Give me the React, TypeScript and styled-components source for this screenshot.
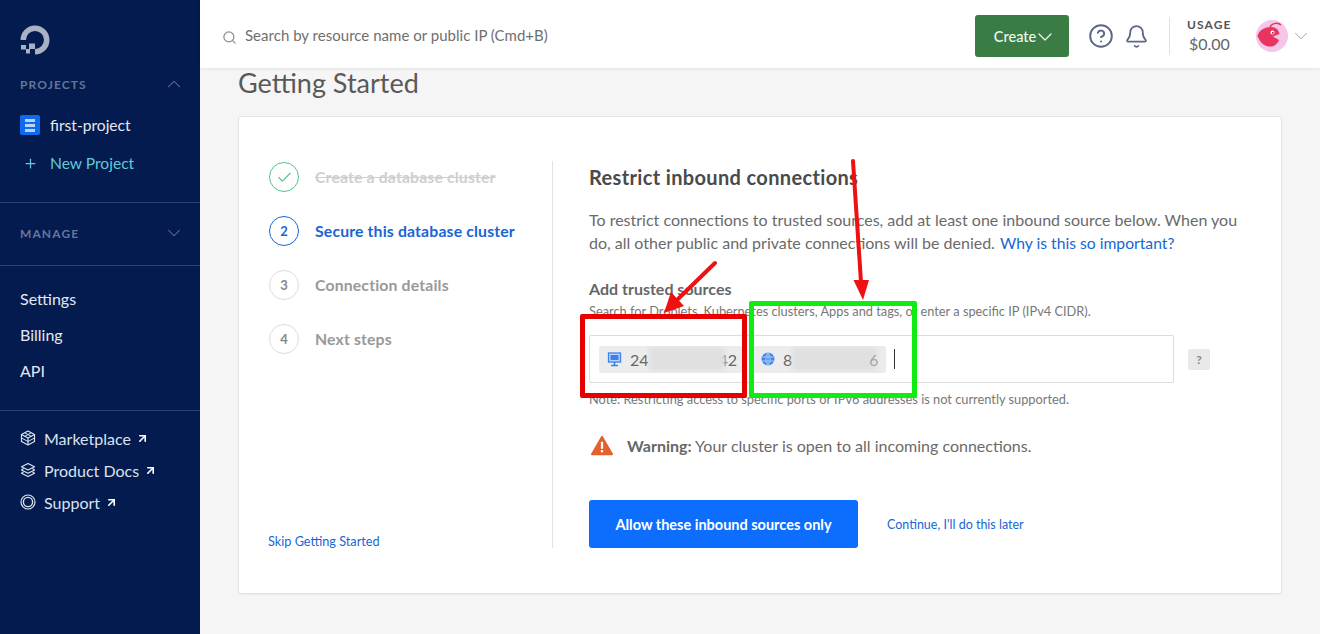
import React from 'react'
import styled, { createGlobalStyle } from 'styled-components'
import {
  ArrowUpRight,
  Bell,
  Check,
  ChevronDown,
  ChevronUp,
  CircleHelp,
  Plus,
  Search
} from 'lucide-react'

const GlobalStyle = createGlobalStyle`
  html, body {
    margin: 0;
    height: 100%;
    overflow: hidden;
    background: #f5f5f5;
    font-family: Lato, "Open Sans", sans-serif;
  }
  * { box-sizing: border-box; }
`

const Page = styled.div`
  display: flex;
  height: 634px;
  position: relative;
  overflow: hidden;
`

/* sidebar */
const Sidebar = styled.aside`
  width: 200px;
  flex: none;
  background: #031b4e;
  display: flex;
  flex-direction: column;
`

const LogoWrap = styled.div`
  padding: 25px 20px 0;
  height: 71px;
  svg { display: block; }
`

const Section = styled.div<{ $divided?: boolean; $top: number; $bottom: number }>`
  padding: ${p => p.$top}px 20px ${p => p.$bottom}px;
  border-top: ${p => (p.$divided ? '1px solid #2d4275' : 'none')};
`

const SectionHead = styled.div<{ $after?: number }>`
  height: 26px;
  margin-bottom: ${p => p.$after ?? 0}px;
  display: flex;
  align-items: center;
  justify-content: space-between;
  color: #66769b;
  font-size: 12px;
  font-weight: 700;
  letter-spacing: 1.1px;
  svg { margin-right: -5px; }
`

const ProjectRow = styled.div<{ $accent?: boolean }>`
  height: 38px;
  display: flex;
  align-items: center;
  gap: 10px;
  font-size: 15.6px;
  color: ${p => (p.$accent ? '#64c7d8' : '#e3e8f2')};
`

const ProjectIcon = styled.span`
  width: 20px;
  height: 20px;
  border-radius: 2px;
  background: #0f6af0;
  display: flex;
  flex-direction: column;
  justify-content: center;
  align-items: center;
  gap: 2px;
  i {
    display: block;
    width: 10px;
    height: 3px;
    background: #b6d6ff;
  }
`

const PlusSlot = styled.span`
  width: 20px;
  display: flex;
  justify-content: center;
`

const NavLink = styled.div`
  height: 36px;
  display: flex;
  align-items: center;
  font-size: 16px;
  color: #e3e8f2;
`

const ExternalLink = styled.div`
  height: 32px;
  display: flex;
  align-items: center;
  gap: 8px;
  font-size: 16px;
  color: #dce2ee;
  svg.arrow { margin-left: -3px; color: #fff; }
`

/* top bar */
const Main = styled.div`
  flex: 1;
  min-width: 0;
  display: flex;
  flex-direction: column;
`

const TopBar = styled.header`
  height: 68px;
  flex: none;
  background: #fff;
  box-shadow: 0 1px 3px rgba(0, 0, 0, 0.08);
  display: flex;
  align-items: center;
  padding: 4px 0 0 22px;
  position: relative;
  z-index: 1;
`

const SearchBox = styled.div`
  flex: 1;
  display: flex;
  align-items: center;
  gap: 8px;
  margin-top: -2px;
  color: #6f6f6f;
  font-size: 15px;
  letter-spacing: 0.02px;
  svg { color: #8e8e8e; margin-top: 4px; }
`

const CreateButton = styled.div`
  width: 94px;
  height: 42px;
  background: #3a7d44;
  border-radius: 3px;
  color: #f2f7f2;
  font-size: 14.5px;
  font-weight: 500;
  padding-left: 2px;
  display: flex;
  align-items: center;
  justify-content: center;
  svg { margin: 0 -5px -1px -3px; }
`

const TopIcons = styled.div`
  display: flex;
  align-items: center;
  gap: 10px;
  margin-left: 19px;
  color: #5b6987;
`

const UsageBox = styled.div`
  margin-left: 20px;
  height: 38px;
  border-left: 1px solid #e2e2e2;
  padding-left: 17px;
  width: 87px;
  display: flex;
  flex-direction: column;
  align-items: flex-start;
`

const UsageLabel = styled.span`
  font-size: 12px;
  font-weight: 700;
  letter-spacing: 1.1px;
  color: #555;
  line-height: 15px;
`

const UsageValue = styled.span`
  font-size: 16px;
  color: #666;
  line-height: 23px;
  padding-left: 2px;
`

const AvatarArea = styled.div`
  display: flex;
  align-items: center;
  gap: 2px;
  padding-right: 8px;
  color: #9a9fac;
`

/* content */
const Content = styled.main`
  flex: 1;
  padding: 0 38px;
`

const Title = styled.h1`
  margin: 0;
  height: 30px;
  line-height: 30px;
  font-size: 27px;
  font-weight: 400;
  color: #595959;
`

const Card = styled.section`
  margin-top: 18px;
  height: 478px;
  background: #fff;
  border: 1px solid #e3e3e3;
  border-radius: 3px;
  box-shadow: 0 1px 2px rgba(0, 0, 0, 0.05);
  padding: 44px 0 45px;
  display: flex;
`

const StepsColumn = styled.div`
  width: 314px;
  flex: none;
  padding: 1px 0 0 30px;
  border-right: 1px solid #e3e3e3;
  display: flex;
  flex-direction: column;
`

const Step = styled.div`
  height: 54px;
  flex: none;
  display: flex;
  gap: 16px;
`

const StepCircle = styled.span<{ $state: 'done' | 'active' | 'idle' }>`
  width: 30px;
  height: 30px;
  border-radius: 50%;
  flex: none;
  display: flex;
  align-items: center;
  justify-content: center;
  font-size: 13px;
  font-weight: 700;
  border: 1px solid
    ${p => (p.$state === 'done' ? '#4fc58a' : p.$state === 'active' ? '#1766d6' : '#dcdcdc')};
  color: ${p => (p.$state === 'done' ? '#4fc58a' : p.$state === 'active' ? '#1766d6' : '#888')};
`

const StepLabel = styled.span<{ $state: 'done' | 'active' | 'idle' }>`
  line-height: 30px;
  font-size: 15.8px;
  letter-spacing: 0.15px;
  font-weight: 700;
  color: ${p => (p.$state === 'done' ? '#cfcfcf' : p.$state === 'active' ? '#1766d6' : '#999')};
  text-decoration: ${p => (p.$state === 'done' ? 'line-through' : 'none')};
`

const SkipLink = styled.a`
  margin: auto 0 0 -1px;
  font-size: 12.7px;
  line-height: 14px;
  color: #1766d6;
`

const FormColumn = styled.div`
  flex: 1;
  padding: 1px 40px 0 36px;
`

const Heading = styled.h2`
  margin: 0;
  line-height: 30px;
  font-size: 20px;
  letter-spacing: 0.35px;
  font-weight: 700;
  color: #4a4a4a;
`

const Intro = styled.p`
  margin: 16px 0 0;
  font-size: 16px;
  line-height: 23px;
  color: #6a6a6a;
  a { color: #1766d6; font-size: 15.7px; margin-left: 1px; }
`

const FieldLabel = styled.div`
  margin-top: 24px;
  font-size: 16px;
  line-height: 20px;
  font-weight: 700;
  color: #666;
`

const Hint = styled.div<{ $gap: number }>`
  margin-top: ${p => p.$gap}px;
  font-size: 12.8px;
  line-height: 14px;
  color: #777;
`

const FieldRow = styled.div`
  margin-top: 17px;
  display: flex;
  align-items: center;
  gap: 14px;
`

const TagInput = styled.div`
  width: 585px;
  height: 48px;
  border: 1px solid #dcdcdc;
  border-radius: 2px;
  padding-left: 9px;
  display: flex;
  align-items: center;
  gap: 11px;
`

const Chip = styled.span<{ $width: number }>`
  width: ${p => p.$width}px;
  height: 27px;
  background: #ececec;
  border-radius: 2px;
  display: flex;
  align-items: center;
  gap: 8px;
  padding-left: 8px;
  font-size: 16px;
  color: #666;
  overflow: hidden;
  flex: none;
  svg { flex: none; }
`

const Smudge = styled.span<{ $width: number }>`
  width: ${p => p.$width}px;
  height: 24px;
  flex: none;
  margin: 0 -8px;
  background: #e0e0e0;
  filter: blur(2px);
`

const Tail = styled.span<{ $shift: number; $fade?: number }>`
  margin-left: ${p => p.$shift}px;
  opacity: ${p => p.$fade ?? 1};
`

const Caret = styled.span`
  width: 1px;
  height: 20px;
  background: #333;
  margin-left: -3px;
`

const HelpBadge = styled.span`
  width: 22px;
  height: 21px;
  border-radius: 2px;
  background: #e9e9e9;
  color: #888;
  font-size: 12px;
  font-weight: 700;
  display: flex;
  align-items: center;
  justify-content: center;
`

const WarningRow = styled.div`
  margin-top: 26px;
  padding-left: 2px;
  display: flex;
  align-items: center;
  gap: 14px;
  height: 26px;
  font-size: 16px;
  color: #6a6a6a;
  b { color: #666; }
`

const Actions = styled.div`
  margin-top: 42px;
  display: flex;
  align-items: center;
  gap: 29px;
`

const PrimaryButton = styled.button`
  width: 269px;
  height: 48px;
  background: #0d6efd;
  border: 0;
  border-radius: 3px;
  color: #fff;
  font: 700 14.5px Lato, sans-serif;
`

const LaterLink = styled.a`
  font-size: 12.5px;
  color: #1766d6;
`

/* annotations painted on the screenshot */
const Frame = styled.div<{ $color: string; $l: number; $t: number; $w: number; $h: number }>`
  position: absolute;
  left: ${p => p.$l}px;
  top: ${p => p.$t}px;
  width: ${p => p.$w}px;
  height: ${p => p.$h}px;
  border: 5px solid ${p => p.$color};
  border-radius: 2px;
`

const ArrowLayer = styled.svg`
  position: absolute;
  left: 0;
  top: 0;
  pointer-events: none;
`

const Logo = () => (
  <svg width='30' height='30' viewBox='0 0 30 30' fill='#a9b1c4'>
    <path d='M15 29.5v-5.6a9 9 0 1 0-9-8.9H.5A14.5 14.5 0 1 1 15 29.5z' />
    <rect x='9' y='18.500' width='6' height='5.500' />
    <rect x='6' y='24' width='4' height='4.500' />
    <rect x='1' y='20' width='5' height='4.500' />
  </svg>
)

const CubeIcon = () => (
  <svg width='16' height='16' viewBox='0 0 16 16' fill='none' stroke='currentColor' strokeWidth='1.200' strokeLinejoin='round'>
    <path d='M8 1 14.500 4.500v7L8 15 1.500 11.500v-7z' />
    <path d='M1.500 4.500 8 8l6.500-3.500M8 8v7' />
    <path d='M1.500 8 8 11.500 14.500 8M4.800 2.800 11.200 6.300M11.200 2.800 4.800 6.300' strokeWidth='1' />
  </svg>
)

const StackIcon = () => (
  <svg width='16' height='16' viewBox='0 0 16 16' fill='none' stroke='currentColor' strokeWidth='1.200' strokeLinejoin='round'>
    <path d='M8 1.500 14.500 4.800 8 8 1.500 4.800z' />
    <path d='M3.500 6.500 1.500 8 8 11.300 14.500 8l-2-1.500' />
    <path d='M3.500 9.800 1.500 11.200 8 14.500l6.500-3.300-2-1.400' />
  </svg>
)

const SupportIcon = () => (
  <svg width='16' height='16' viewBox='0 0 16 16' fill='none' stroke='currentColor' strokeWidth='1.2'>
    <circle cx='8' cy='8' r='7' />
    <circle cx='8' cy='8' r='4.600' strokeWidth='1.4' />
  </svg>
)

const Avatar = () => (
  <svg width='32' height='32' viewBox='0 0 32 32'>
    <circle cx='16' cy='16' r='16' fill='#f3c6ea' />
    <path d='M1.500 16C3 10 9 7 15 7c5 0 8 3 8.500 7L17 16.500l6 3.500c-2 5-6 7-10 6.500-5-.5-9-4-11.500-10.500z' fill='#e8345f' />
    <path d='M14 7c2-4 8-5 11-2' fill='none' stroke='#e8345f' strokeWidth='1.500' />
    <circle cx='16.500' cy='12.500' r='2' fill='#fff' />
    <circle cx='16.800' cy='12.800' r='.9' fill='#7a1030' />
  </svg>
)

const DropletIcon = () => (
  <svg width='15' height='15' viewBox='0 0 14 15' fill='none' stroke='#3b82ee' strokeWidth='1.300'>
    <rect x='1' y='1' width='12' height='9' fill='#bcd6fb' />
    <rect x='3' y='3' width='8' height='5' fill='#3b82ee' stroke='none' />
    <path d='M7 10v3M3.500 13.500h7' strokeWidth='1.600' />
  </svg>
)

const GlobeIcon = () => (
  <svg width='14' height='14' viewBox='0 0 14 14'>
    <circle cx='7' cy='7' r='6.500' fill='#3f86ea' />
    <path d='M1 5h12M1 9h12M7 .5v13M7 .5c-3 3-3 10 0 13M7 .5c3 3 3 10 0 13' fill='none' stroke='#cfe0fa' strokeWidth='.7' />
  </svg>
)

const WarningIcon = () => (
  <svg width='22' height='21' viewBox='0 0 24 22'>
    <path d='M12 1.500 23 20.500H1z' fill='#e5602c' stroke='#e5602c' strokeWidth='2' strokeLinejoin='round' />
    <rect x='10.800' y='7' width='2.400' height='7.500' fill='#fff' />
    <rect x='10.800' y='16' width='2.400' height='2.400' fill='#fff' />
  </svg>
)

const steps = [
  { label: 'Create a database cluster', state: 'done' },
  { label: 'Secure this database cluster', state: 'active' },
  { label: 'Connection details', state: 'idle' },
  { label: 'Next steps', state: 'idle' }
] as const

export default function App (): JSX.Element {
  return (
    <Page>
      <GlobalStyle />
      <Sidebar>
        <LogoWrap><Logo /></LogoWrap>
        <Section $top={0} $bottom={20}>
          <SectionHead $after={9}>PROJECTS <ChevronUp size={22} strokeWidth={1.1} /></SectionHead>
          <ProjectRow><ProjectIcon><i /><i /><i /></ProjectIcon>first-project</ProjectRow>
          <ProjectRow $accent><PlusSlot><Plus size={15} /></PlusSlot>New Project</ProjectRow>
        </Section>
        <Section $divided $top={17} $bottom={19}>
          <SectionHead>MANAGE <ChevronDown size={22} strokeWidth={1.1} /></SectionHead>
        </Section>
        <Section $divided $top={14} $bottom={22}>
          <NavLink>Settings</NavLink>
          <NavLink>Billing</NavLink>
          <NavLink>API</NavLink>
        </Section>
        <Section $divided $top={11} $bottom={0}>
          <ExternalLink><CubeIcon />Marketplace<ArrowUpRight className='arrow' size={13} strokeWidth={3} /></ExternalLink>
          <ExternalLink><StackIcon />Product Docs<ArrowUpRight className='arrow' size={13} strokeWidth={3} /></ExternalLink>
          <ExternalLink><SupportIcon />Support<ArrowUpRight className='arrow' size={13} strokeWidth={3} /></ExternalLink>
        </Section>
      </Sidebar>

      <Main>
        <TopBar>
          <SearchBox><Search size={15} />Search by resource name or public IP (Cmd+B)</SearchBox>
          <CreateButton>Create<ChevronDown size={24} strokeWidth={1.2} /></CreateButton>
          <TopIcons>
            <CircleHelp size={26} strokeWidth={1.8} />
            <Bell size={25} strokeWidth={1.7} />
          </TopIcons>
          <UsageBox>
            <UsageLabel>USAGE</UsageLabel>
            <UsageValue>$0.00</UsageValue>
          </UsageBox>
          <AvatarArea><Avatar /><ChevronDown size={22} strokeWidth={1} /></AvatarArea>
        </TopBar>

        <Content>
          <Title>Getting Started</Title>
          <Card>
            <StepsColumn>
              {steps.map((step, index) => (
                <Step key={step.label}>
                  <StepCircle $state={step.state}>
                    {step.state === 'done' ? <Check size={17} strokeWidth={1.6} /> : index + 1}
                  </StepCircle>
                  <StepLabel $state={step.state}>{step.label}</StepLabel>
                </Step>
              ))}
              <SkipLink>Skip Getting Started</SkipLink>
            </StepsColumn>
            <FormColumn>
              <Heading>Restrict inbound connections</Heading>
              <Intro>
                To restrict connections to trusted sources, add at least one inbound source below. When you
                do, all other public and private connections will be denied. <a>Why is this so important?</a>
              </Intro>
              <FieldLabel>Add trusted sources</FieldLabel>
              <Hint $gap={5}>Search for Droplets, Kubernetes clusters, Apps and tags, or enter a specific IP (IPv4 CIDR).</Hint>
              <FieldRow>
                <TagInput>
                  <Chip $width={143}><DropletIcon />24<Smudge $width={76} /><Tail $shift={-6}>42</Tail></Chip>
                  <Chip $width={133}><GlobeIcon />8<Smudge $width={85} /><Tail $shift={-8} $fade={0.5}>6</Tail></Chip>
                  <Caret />
                </TagInput>
                <HelpBadge>?</HelpBadge>
              </FieldRow>
              <Hint $gap={9}>Note: Restricting access to specific ports or IPv6 addresses is not currently supported.</Hint>
              <WarningRow><WarningIcon /><span><b>Warning:</b> Your cluster is open to all incoming connections.</span></WarningRow>
              <Actions>
                <PrimaryButton>Allow these inbound sources only</PrimaryButton>
                <LaterLink>Continue, I'll do this later</LaterLink>
              </Actions>
            </FormColumn>
          </Card>
        </Content>
      </Main>

      <Frame $color='#e60000' $l={580} $t={314} $w={167} $h={84} />
      <Frame $color='#0fec0f' $l={749} $t={301} $w={168} $h={97} />
      <ArrowLayer width='1320' height='634' viewBox='0 0 1320 634'>
        <path d='M715 263 678 299' stroke='#ee1111' strokeWidth='4' strokeLinecap='round' fill='none' />
        <path d='M664 313 671 292 684 306z' fill='#ee1111' />
        <path d='M853 161 861 282' stroke='#ee1111' strokeWidth='4' strokeLinecap='round' fill='none' />
        <path d='M863 300 853.500 280 869 280z' fill='#ee1111' />
      </ArrowLayer>
    </Page>
  )
}
